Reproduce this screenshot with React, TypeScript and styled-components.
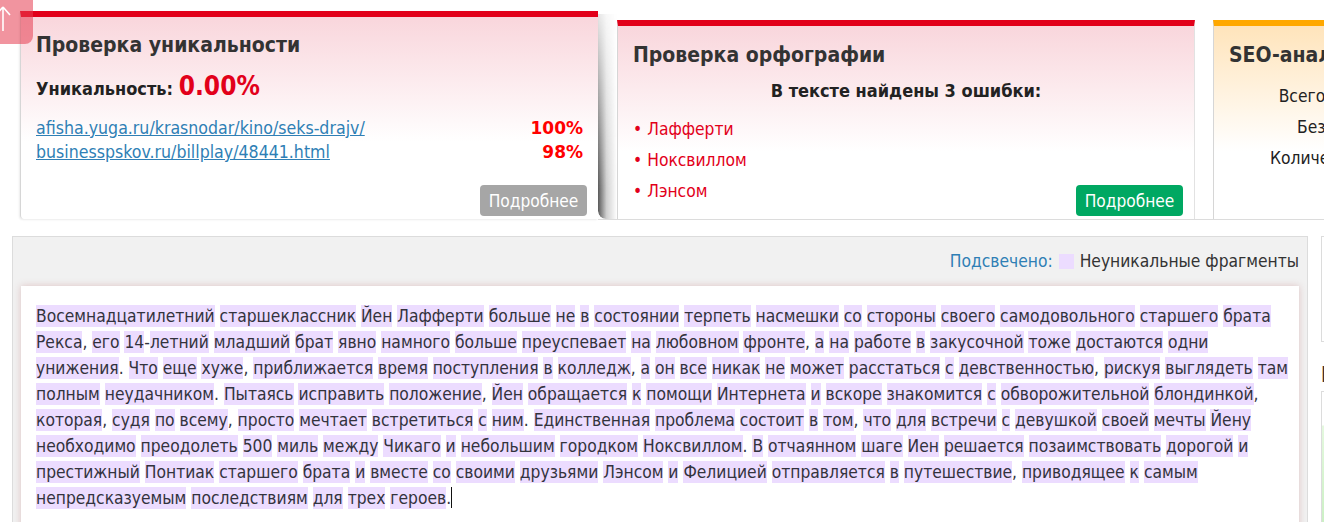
import React from "react";
import styled, { createGlobalStyle } from "styled-components";

const Global = createGlobalStyle`
  html, body {
    margin: 0;
    padding: 0;
    overflow: hidden;
    background: #fff;
  }
  body {
    font-family: "DejaVu Sans", "Liberation Sans", sans-serif;
    font-stretch: condensed;
    color: #333;
    font-size: 17.3px;
  }
  * { box-sizing: border-box; }
`;

const Page = styled.div`
  width: 1324px;
  height: 522px;
  overflow: hidden;
  position: relative;
`;

const ScrollTop = styled.a`
  position: fixed;
  top: 0;
  left: 0;
  width: 33px;
  height: 44px;
  background: rgba(230, 60, 80, 0.55);
  border-bottom-right-radius: 8px;
  z-index: 10;
  display: block;
`;

const Row = styled.div`
  display: flex;
  height: 220px;
  padding-left: 20px;
  width: 2000px;
`;

const Card = styled.div<{ $h: number; $bar: string; $from: string }>`
  width: 578px;
  height: ${(p) => p.$h}px;
  flex: none;
  display: flex;
  flex-direction: column;
  border-top: 6px solid ${(p) => p.$bar};
  background: linear-gradient(to bottom, ${(p) => p.$from} 0px, #fff 125px);
  border-left: 1px solid #d6d6d6;
  border-right: 1px solid #e2e2e2;
  padding: 0 15px;
  position: relative;
`;

const ActiveCard = styled(Card)`
  align-self: flex-start;
  margin-top: 11px;
  border-right: none;
  border-bottom-left-radius: 4px;
  box-shadow: -1px 1px 2px rgba(0, 0, 0, 0.08);
`;

const Track = styled.div`
  display: flex;
  align-items: flex-end;
  border-bottom: 1px solid #dcdcdc;
  gap: 18px;
  flex: none;
`;

const Shade = styled.div`
  width: 19px;
  height: 205px;
  margin-right: -18px;
  border-bottom-left-radius: 8px;
  background: linear-gradient(to right, rgba(60, 60, 60, 0.85), rgba(120, 120, 120, 0.35) 45%, rgba(255, 255, 255, 0));
  -webkit-mask-image: linear-gradient(to bottom, rgba(0, 0, 0, 0.15), rgba(0, 0, 0, 1) 85%);
  mask-image: linear-gradient(to bottom, rgba(0, 0, 0, 0.15), rgba(0, 0, 0, 1) 85%);
`;

const Title = styled.h2<{ $pt: number }>`
  margin: ${(p) => p.$pt}px 0 0;
  font-size: 21px;
  line-height: 24px;
  font-weight: bold;
  color: #333;
  white-space: nowrap;
`;

const UniqLine = styled.div`
  margin-top: 14px;
  line-height: 30px;
  font-weight: bold;
  font-size: 18px;
  color: #222;
`;

const UniqValue = styled.span`
  color: #e2001a;
  font-size: 26px;
`;

const SourceList = styled.div`
  margin-top: 12px;
`;

const SourceRow = styled.div`
  display: flex;
  justify-content: space-between;
  line-height: 24px;
  font-size: 17.6px;
`;

const SourceLink = styled.a`
  color: #2f7fb5;
  text-decoration: underline;
`;

const Percent = styled.span`
  color: #ff0000;
  font-weight: bold;
  font-size: 17px;
  font-stretch: normal;
`;

const MoreButton = styled.a<{ $bg: string }>`
  position: absolute;
  right: 11px;
  bottom: 3px;
  width: 107px;
  height: 31px;
  border-radius: 4px;
  background: ${(p) => p.$bg};
  color: #fff;
  font-size: 17.2px;
  display: flex;
  align-items: center;
  justify-content: center;
`;

const ErrorsHead = styled.div`
  margin-top: 14px;
  text-align: center;
  font-weight: bold;
  font-size: 18px;
  line-height: 20px;
  color: #222;
`;

const ErrorList = styled.ul`
  list-style: none;
  margin: 13px 0 0;
  padding: 0;
`;

const ErrorItem = styled.li`
  color: #e2001a;
  line-height: 31px;
  &::before {
    content: "•";
    margin-right: 5px;
  }
`;

const StatTable = styled.div`
  margin-top: 14px;
  width: 184px;
  text-align: right;
`;

const StatRow = styled.div`
  line-height: 31px;
  white-space: nowrap;
  color: #222;
`;

const Lower = styled.div`
  display: flex;
  margin-top: 16px;
  padding-left: 12px;
  gap: 13px;
  width: 2000px;
`;

const MainPanel = styled.div`
  width: 1296px;
  height: 320px;
  flex: none;
  background: #f1f1f1;
  border: 1px solid #dcdcdc;
  padding: 14px 8px 0 8px;
`;

const Legend = styled.div`
  display: flex;
  justify-content: flex-end;
  align-items: center;
  line-height: 20px;
  color: #333;
`;

const LegendLabel = styled.span`
  color: #2f7fb5;
  margin-right: 6px;
`;

const Swatch = styled.span`
  width: 15px;
  height: 15px;
  background: #ecdcff;
  margin-right: 6px;
`;

const TextBox = styled.div`
  margin-top: 15px;
  background: #fff;
  height: 300px;
  padding: 17px 0 0 15px;
  box-shadow: 0 0 7px rgba(200, 140, 140, 0.45);
  color: #33333d;
`;

const Line = styled.div`
  line-height: 26px;
  white-space: nowrap;
`;

const Hl = styled.span`
  background: #ecdcff;
  padding: 1px 0;
`;

const Caret = styled.span`
  display: inline-block;
  width: 1px;
  height: 21px;
  background: #111;
  vertical-align: -4px;
`;

const Side = styled.div`
  width: 300px;
  flex: none;
  display: flex;
  flex-direction: column;
`;

const SideBox = styled.div`
  height: 106px;
  border: 1px solid #dcdcdc;
  background: #fff;
`;

const SideTitle = styled.div`
  margin-top: 21px;
  font-size: 21px;
  font-weight: bold;
  line-height: 24px;
  color: #3a3030;
  white-space: nowrap;
`;

const SideCard = styled.div`
  margin-top: 4px;
  height: 140px;
  border: 1px solid #dcdcdc;
  border-bottom: none;
  background: linear-gradient(to bottom, #fff 0, #fff 33px, #e4f8de 34px, #c9efc2 140px);
`;

const lines = [
  "Восемнадцатилетний старшеклассник Йен Лафферти больше не в состоянии терпеть насмешки со стороны своего самодовольного старшего брата",
  "Рекса, его 14-летний младший брат явно намного больше преуспевает на любовном фронте, а на работе в закусочной тоже достаются одни",
  "унижения. Что еще хуже, приближается время поступления в колледж, а он все никак не может расстаться с девственностью, рискуя выглядеть там",
  "полным неудачником. Пытаясь исправить положение, Йен обращается к помощи Интернета и вскоре знакомится с обворожительной блондинкой,",
  "которая, судя по всему, просто мечтает встретиться с ним. Единственная проблема состоит в том, что для встречи с девушкой своей мечты Йену",
  "необходимо преодолеть 500 миль между Чикаго и небольшим городком Ноксвиллом. В отчаянном шаге Иен решается позаимствовать дорогой и",
  "престижный Понтиак старшего брата и вместе со своими друзьями Лэнсом и Фелицией отправляется в путешествие, приводящее к самым",
  "непредсказуемым последствиям для трех героев.",
];

const wordRe = /([A-Za-zА-Яа-яЁё0-9]+)/;

function renderLine(text: string) {
  return text.split(wordRe).map((part, i) =>
    i % 2 === 1 ? <Hl key={i}>{part}</Hl> : <React.Fragment key={i}>{part}</React.Fragment>
  );
}

export default function App() {
  return (
    <Page>
      <Global />
      <ScrollTop>
        <svg width="14" height="34" viewBox="0 0 14 34" style={{ position: "absolute", left: -1, top: 3 }}>
          <path d="M4 4 V28 M4 4 L-3 12 M4 4 L11 12" stroke="#fff" strokeWidth="1.6" fill="none" />
        </svg>
      </ScrollTop>
      <Row>
        <ActiveCard $h={208} $bar="#e2001a" $from="#f9d6dc">
          <Title $pt={16}>Проверка уникальности</Title>
          <UniqLine>
            Уникальность: <UniqValue>0.00%</UniqValue>
          </UniqLine>
          <SourceList>
            <SourceRow>
              <SourceLink>afisha.yuga.ru/krasnodar/kino/seks-drajv/</SourceLink>
              <Percent>100%</Percent>
            </SourceRow>
            <SourceRow>
              <SourceLink>businesspskov.ru/billplay/48441.html</SourceLink>
              <Percent>98%</Percent>
            </SourceRow>
          </SourceList>
          <MoreButton $bg="#a6a6a6">Подробнее</MoreButton>
        </ActiveCard>
        <Track>
          <Shade />
          <Card $h={199} $bar="#e2001a" $from="#f9d6dc">
            <Title $pt={17}>Проверка орфографии</Title>
            <ErrorsHead>В тексте найдены 3 ошибки:</ErrorsHead>
            <ErrorList>
              <ErrorItem>Лафферти</ErrorItem>
              <ErrorItem>Ноксвиллом</ErrorItem>
              <ErrorItem>Лэнсом</ErrorItem>
            </ErrorList>
            <MoreButton $bg="#00a862">Подробнее</MoreButton>
          </Card>
          <Card $h={199} $bar="#ffa800" $from="#ffe4bb">
            <Title $pt={17}>SEO-анализ текста</Title>
            <StatTable>
              <StatRow>Всего символов:</StatRow>
              <StatRow>Без пробелов:</StatRow>
              <StatRow>Количество слов:</StatRow>
            </StatTable>
          </Card>
        </Track>
      </Row>
      <Lower>
        <MainPanel>
          <Legend>
            <LegendLabel>Подсвечено:</LegendLabel>
            <Swatch />
            Неуникальные фрагменты
          </Legend>
          <TextBox>
            {lines.map((l, i) => (
              <Line key={i}>
                {renderLine(l)}
                {i === lines.length - 1 && <Caret />}
              </Line>
            ))}
          </TextBox>
        </MainPanel>
        <Side>
          <SideBox />
          <SideTitle>Проверка</SideTitle>
          <SideCard />
        </Side>
      </Lower>
    </Page>
  );
}
